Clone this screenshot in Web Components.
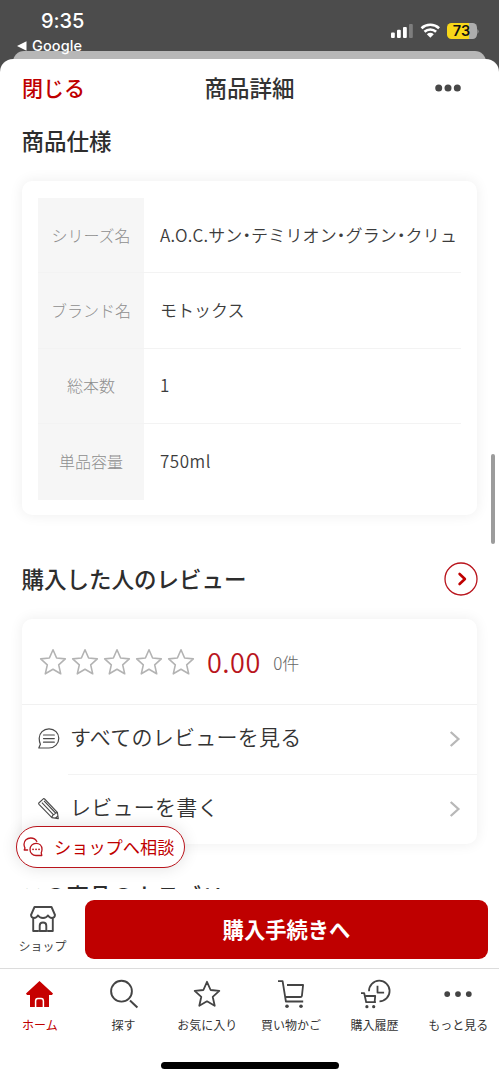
<!DOCTYPE html>
<html lang="ja">
<head>
<meta charset="utf-8">
<title>商品詳細</title>
<style>
html,body{margin:0;padding:0}
body{width:499px;height:1080px;overflow:hidden;background:#4c4c4c;color:#333;font-family:"Noto Sans CJK JP","Liberation Sans",sans-serif}
</style>
</head>
<body>
<product-app></product-app>
<script>
const define = (name, html, setup) => customElements.define(name, class extends HTMLElement {
  constructor() {
    super();
    const t = document.createElement('template');
    t.innerHTML = '<style>*{box-sizing:border-box}:host{display:block;box-sizing:border-box}svg{display:block;flex:none}</style>' + html;
    this.attachShadow({ mode: 'open' }).appendChild(t.content.cloneNode(true));
    if (setup) setup.call(this);
  }
});

const STAR = 'M14 1.8 17.6 10 26.3 10.9 19.7 16.8 21.7 25.8 14 21.3 6.3 25.8 8.3 16.8 1.7 10.9 10.4 10Z';
const ICONS = {
  home: '<path fill="#c60000" stroke="none" d="M13.5 1 27 13.4l-1 1.6h-3V27H4V15H1l-1-1.6Z"/><path stroke="#fff" stroke-width="1.5" d="M9.6 27v-6c0-1.6.8-2.6 2.3-2.6h3.2c1.5 0 2.3 1 2.3 2.6v6"/>',
  search: '<circle cx="11.5" cy="11.2" r="10.4"/><path stroke-width="2" d="m20 20.5 7.4 7"/>',
  star: '<path stroke-width="1.8" d="' + STAR + '"/>',
  cart: '<path stroke-width="1.8" d="M1 1.2h4.6l3.3 20.3h17.3M10 5h16.1l-1.2 10.8q-.2 1.2-1.5 1.2H9"/><g fill="#444" stroke="none"><circle cx="10" cy="26.2" r="1.8"/><circle cx="24" cy="26.2" r="1.8"/></g>',
  history: '<path stroke-width="1.8" d="M8 11.2A10.3 10.3 0 1 1 18.5 21.3M16.5 5.8v6.8h6.6M0 13.2h3.2l2 9h9.7M4.7 16h9.5l-.5 5.3"/><g fill="#444" stroke="none"><circle cx="5.9" cy="26.7" r="1.6"/><circle cx="12.7" cy="26.7" r="1.6"/></g>',
  more: '<g fill="#444" stroke="none"><circle cx="3.2" cy="14.1" r="2.9"/><circle cx="14" cy="14.1" r="2.9"/><circle cx="24.8" cy="14.1" r="2.9"/></g>'
};

define('ui-icon', '<style>:host{width:28px;height:28px}svg{overflow:visible}</style><svg width="28" height="28" viewBox="0 0 28 28" fill="none" stroke="#444" stroke-width="1.9" stroke-linejoin="round"></svg>', function () {
  this.shadowRoot.querySelector('svg').innerHTML = ICONS[this.getAttribute('name')] || '';
});

define('status-bar', `<style>
:host{height:59px;color:#fff;font-family:Inter,sans-serif;position:relative;padding:10px 0 0 17px}
.time{font-size:20px;line-height:22px;font-weight:500;padding-left:24px;letter-spacing:-.1px}
.back{display:flex;align-items:center;gap:5px;font-size:14.5px;line-height:18px;font-weight:500;margin-top:5px;letter-spacing:.1px;position:relative;z-index:1}
.right{position:absolute;right:20px;top:22px;display:flex;align-items:center;font-weight:600}
.behind{position:absolute;left:13px;right:13px;top:51px;height:22px;background:#b7b7b7;border-radius:11px 11px 0 0}
.bat{width:30px;height:16px;border-radius:4.5px;background:linear-gradient(90deg,#f8d719 73%,#adadad 73%);color:#111;font-size:14.5px;line-height:16px;text-align:center;padding-right:1px;margin-left:7px}
</style><div class="time">9:35</div><div class="back"><svg width="10" height="10"><path fill="#fff" d="M0 5 9.5.3v9.4Z"/></svg><span>Google</span></div>
<div class="behind"></div>
<div class="right"><svg width="50" height="18" viewBox="0 0 50 18"><g fill="#fff"><rect x="1" y="10.5" width="3.8" height="5.5" rx="1"/><rect x="7" y="7.8" width="3.8" height="8.2" rx="1"/><rect x="13" y="5" width="3.8" height="11" rx="1"/><rect x="19" y="2" width="3.8" height="14" rx="1" opacity=".28"/></g><path d="M31.5 6.2a13 13 0 0 1 17.6 0M34.5 9.8a8.6 8.6 0 0 1 11.6 0" fill="none" stroke="#fff" stroke-width="2.6"/><path fill="#fff" d="M36.8 12.3q3.5-2.9 7 0L40.3 15.8Z"/></svg><div class="bat">73</div><svg width="2" height="5"><path d="M0 0q2 2.5 0 5Z" transform="translate(.5)" fill="#aaa"/></svg></div>`);

define('sheet-header', `<style>
:host{height:58px;display:grid;grid-template-columns:1fr auto 1fr;align-items:center;padding:0 38px 0 22px;font-weight:500;line-height:30px}
.close{color:#bf0000;font-size:21px;transform:translateY(-1px)}.title{font-size:22.5px;transform:translate(8px,-1px)}svg{justify-self:end}
</style><div class="close">閉じる</div><div class="title">商品詳細</div><svg width="26" height="8"><g fill="#484848"><circle cx="3.7" cy="4" r="3.5"/><circle cx="13" cy="4" r="3.5"/><circle cx="22.3" cy="4" r="3.5"/></g></svg>`);

define('section-heading', `<style>:host{display:flex;justify-content:space-between;align-items:center;padding:0 21px 0 21.5px;font-size:22.5px;line-height:34px;font-weight:500;height:34px;color:#2d2d2d;white-space:nowrap}span{transform:translateY(-1px)}</style><span><slot></slot></span><slot name="end"></slot>`);

define('circle-arrow', `<svg width="34" height="34" viewBox="0 0 34 34" fill="none" stroke="#bf0000"><circle cx="17" cy="17" r="16" stroke-width="1.3" stroke="#b9141c"/><path stroke-width="2.6" stroke-linecap="round" stroke-linejoin="round" d="m15.6 12 5.3 5-5.3 5"/></svg>`);

define('ui-card', `<style>:host{margin:0 22px;background:#fff;border-radius:10px;box-shadow:0 0 14px rgba(0,0,0,.075)}</style><slot></slot>`);

define('spec-row', `<style>
:host{display:grid;grid-template-columns:106px 1fr;height:75.4px;line-height:24px;white-space:nowrap}
.l{background:#f6f6f6;color:#8e8e8e;font-size:16px;display:flex;align-items:center;justify-content:center;font-weight:300;padding-bottom:1px}
.v{font-size:17px;padding:0 0 1px 16px;display:flex;align-items:center;color:#3c3c3c;font-weight:350}
.l,.v{border-bottom:1px solid #f3f3f3}
:host(:last-child) .l,:host(:last-child) .v{border:0;padding-bottom:2px}
</style><div class="l"><slot name="label"></slot></div><div class="v"><slot></slot></div>`);

define('rating-summary', `<style>
:host{display:flex;align-items:center;height:86px;padding:2px 0 0 17px;border-bottom:1px solid #f1f1f1}
.stars{display:flex;gap:4px}.score{color:#b9141c;font-size:27px;line-height:32px;margin:-1px 0 0 12px;font-weight:350;letter-spacing:.5px}.n{font-size:17px;color:#666;line-height:24px;margin:2px 0 0 12.5px;font-weight:300}
</style><div class="stars"></div><span class="score">0.00</span><span class="n">0件</span>`, function () {
  this.shadowRoot.querySelector('.stars').innerHTML =
    ('<svg width="28" height="28" viewBox="0 0 28 28"><path fill="none" stroke="#b3b3b3" stroke-width="1.6" stroke-linejoin="round" d="' + STAR + '"/></svg>').repeat(5);
});

define('link-row', `<style>
:host{display:flex;align-items:center;height:69px;padding:0 16px;font-size:21px;line-height:30px;white-space:nowrap}
.t{flex:1;padding-left:10px;transform:translateY(-3px);font-weight:350;letter-spacing:.25px}
</style><slot name="icon"></slot><span class="t"><slot></slot></span><svg width="12" height="18" viewBox="0 0 12 18"><path fill="none" stroke="#b8b8b8" stroke-width="2.3" d="m1.7 2 7.7 7-7.7 7"/></svg>`);

define('comment-icon', `<style>:host{width:22px;height:22px}</style><svg width="22" height="22" viewBox="0 0 22 22" fill="none" stroke="#4a4a4a" stroke-width="1.2" stroke-linecap="round" stroke-linejoin="round"><path d="M11 .9C16.6.9 20.8 5 20.8 10.3S16.6 20 11 20H.8l1.6-3.8C1.6 14.5 1.2 12.4 1.2 10.3 1.2 5 5.4.9 11 .9Z"/><path d="M5.5 7h10.8M5.5 10.6h10.8M5.5 14.2h10.8"/></svg>`);
define('pencil-icon', `<style>:host{width:22px;height:22px}</style><svg width="22" height="22" viewBox="0 0 22 22" fill="none" stroke="#4a4a4a" stroke-width="1.1" stroke-linejoin="round"><path d="M.8 5 5.3.8Q6 .4 6.6 1L19.4 14.3 20.3 20.6 13.9 19.6 1 6.3Q.4 5.6.8 5ZM3.9 4.6 15.6 16.8M6 2.9 17.6 15M13.9 19.6l.7-2.2 1-.6 2-1.8 1.8-.7M17.5 20.1l2.4-2.3"/></svg>`);

define('chat-pill', `<style>
:host{position:absolute;left:16px;top:826px;width:169px;height:42px;border:1.4px solid #b9141c;border-radius:21px;background:#fff;display:flex;align-items:center;padding-left:6px;color:#b9141c;font-size:17.2px;line-height:24px;white-space:nowrap;box-shadow:0 0 16px rgba(0,0,0,.12)}
span{margin-left:11px;transform:translateY(-.5px);color:#bf0000}
</style><svg width="20" height="20" viewBox="0 0 20 20" fill="none" stroke="#b9141c" stroke-width="1.3" stroke-linejoin="round" stroke-linecap="round"><path d="M13.8 4.6C12.7 2.2 10.4 1 7.7 1 4 1 1 3.7 1 7.2c0 1.7.4 2.8 1 3.9L1.2 13h3.4"/><path d="M13 6.4c3.5 0 6 2.5 6 5.9 0 1.4-.3 2.5-.8 3.4l.6 2.8H13c-3.4 0-6-2.6-6-6.1 0-3.4 2.5-6 6-6Z"/><path d="M10 12.3h.1M13 12.3h.1M16 12.3h.1" stroke-width="1.7"/></svg><span>ショップへ相談</span>`);

define('buy-bar', `<style>
:host{display:flex;height:79px;background:#fff;padding:11px 11px 0 0}
.shop{width:85px;display:flex;flex-direction:column;align-items:center;font-size:12px;line-height:18px;padding-top:6px;color:#444}
.shop span{margin-top:5px}
button{flex:1;height:59px;border:0;border-radius:9px;background:#bf0000;color:#fff;font:700 21.3px/30px "Noto Sans CJK JP",sans-serif;padding:0 0 1px;text-align:center}
</style><div class="shop"><svg width="26" height="26" viewBox="0 0 26 26" fill="none" stroke="#484848" stroke-width="1.9" stroke-linejoin="round" stroke-linecap="round"><path d="M4.5 1h17L25 9q-.3 3-3 3-2.7 0-4-2.6-1.4 2.6-5 2.6T8 9.4Q6.7 12 4 12 1.3 12 1 9ZM3.2 12.5V25H8M22.8 12.5V25H18M9.7 25v-5.3q0-3.2 3.3-3.2t3.3 3.2V25H9.7"/></svg><span>ショップ</span></div><button>購入手続きへ</button>`);

define('tab-item', `<style>
:host{display:flex;flex-direction:column;align-items:center;flex:0 0 83.7px;font-size:12px;line-height:18px;color:#333;padding-top:11px;white-space:nowrap}
:host([active]){color:#bf0000}span{margin-top:8px}
</style><slot name="icon"></slot><span><slot></slot></span>`);

define('tab-bar', `<style>
:host{height:112px;border-top:1px solid #dcdcdc;background:#fff;display:flex;flex-direction:column}
nav{display:flex;margin-left:-2px;height:93px}i{width:178px;height:7px;border-radius:4px;background:#000;align-self:center}
</style><nav><slot></slot></nav><i></i>`);

define('product-app', `<style>
:host{width:499px;height:1080px;display:flex;flex-direction:column;background:#4c4c4c;position:relative;overflow:hidden}
main{height:830px;flex:none;background:#fff;border-radius:13px 13px 0 0;position:relative;overflow:hidden}
.a{margin-top:7px}.spec{margin-top:23px;padding:17px 16px 15.4px}.b{margin-top:47px}.rev{margin-top:23px;height:225px}
.line{margin-left:46px;border-top:1px solid #f3f3f3}.c{margin-top:35px}
.aoc{font-feature-settings:"halt";letter-spacing:.15px}
.scroll{position:absolute;left:491px;top:454px;width:4px;height:90px;border-radius:2px;background:#9c9c9c}
</style>
<status-bar></status-bar>
<main>
<sheet-header></sheet-header>
<section-heading class="a">商品仕様</section-heading>
<ui-card class="spec">
<spec-row><span slot="label">シリーズ名</span><span class="aoc">A.O.C.サン・テミリオン・グラン・クリュ</span></spec-row>
<spec-row><span slot="label">ブランド名</span><span>モトックス</span></spec-row>
<spec-row><span slot="label">総本数</span><span>1</span></spec-row>
<spec-row><span slot="label">単品容量</span><span style="letter-spacing:.5px">750ml</span></spec-row>
</ui-card>
<section-heading class="b">購入した人のレビュー<circle-arrow slot="end"></circle-arrow></section-heading>
<ui-card class="rev">
<rating-summary></rating-summary>
<link-row><comment-icon slot="icon"></comment-icon>すべてのレビューを見る</link-row>
<div class="line"></div>
<link-row><pencil-icon slot="icon"></pencil-icon>レビューを書く</link-row>
</ui-card>
<section-heading class="c">この商品のカテゴリー</section-heading>
</main>
<buy-bar></buy-bar>
<tab-bar>
<tab-item active><ui-icon slot="icon" name="home"></ui-icon>ホーム</tab-item>
<tab-item><ui-icon slot="icon" name="search"></ui-icon>探す</tab-item>
<tab-item><ui-icon slot="icon" name="star"></ui-icon>お気に入り</tab-item>
<tab-item><ui-icon slot="icon" name="cart"></ui-icon>買い物かご</tab-item>
<tab-item><ui-icon slot="icon" name="history"></ui-icon>購入履歴</tab-item>
<tab-item><ui-icon slot="icon" name="more"></ui-icon>もっと見る</tab-item>
</tab-bar>
<chat-pill></chat-pill>
<div class="scroll"></div>`);
</script>
</body>
</html>
